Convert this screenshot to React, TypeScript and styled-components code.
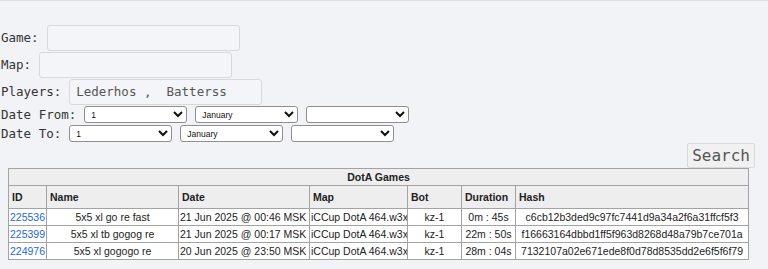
import React from 'react'
import styled, { createGlobalStyle } from 'styled-components'

const Global = createGlobalStyle`
  html, body {
    margin: 0;
    padding: 0;
    background: #f2f3f7;
  }
  body {
    border-top: 1px solid #dcdde3;
    font-family: 'DejaVu Sans Mono', monospace;
  }
`

const Page = styled.div`
  padding: 24px 0 0 1px;
`

const Form = styled.div`
  display: flex;
  flex-direction: column;
  gap: 2px;
`

const Row = styled.div<{ $h?: number }>`
  display: flex;
  align-items: center;
  gap: 8px;
  height: ${(p) => p.$h || 25}px;
`

const Label = styled.label`
  font-family: 'DejaVu Sans Mono', monospace;
  font-size: 12.5px;
  color: #333;
  white-space: pre;
`

const TextInput = styled.input`
  box-sizing: border-box;
  width: 193px;
  height: 26px;
  border: 1px solid #d8d9de;
  border-radius: 3px;
  background: #f4f5f8;
  padding: 0 6px;
  font-family: 'DejaVu Sans Mono', monospace;
  font-size: 12.5px;
  color: #555;
  outline: none;
`

const Select = styled.select`
  box-sizing: border-box;
  width: 103px;
  height: 17px;
  border: 1px solid #8f8f8f;
  border-radius: 3px;
  background: #fff;
  font-family: 'Liberation Sans', Arial, sans-serif;
  font-size: 8.5px;
  color: #111;
  padding: 0 2px;
`

const DateRows = styled.div`
  display: flex;
  flex-direction: column;
  gap: 2px;
  margin-top: 2px;
`

const ButtonBar = styled.div`
  display: flex;
  justify-content: flex-end;
  padding-right: 13px;
  margin-top: 1px;
`

const SearchButton = styled.button`
  height: 25px;
  padding: 0 4px;
  border: 1px solid #dadada;
  border-radius: 2px;
  background: #f1f1f1;
  font-family: 'DejaVu Sans Mono', monospace;
  font-size: 16px;
  color: #555;
`

const Table = styled.table`
  margin-left: 7px;
  width: 740px;
  table-layout: fixed;
  border-collapse: collapse;
  font-family: 'Liberation Sans', Arial, sans-serif;
  font-size: 10.5px;
  color: #222;
  background: #fff;
`

const Title = styled.th`
  height: 16px;
  padding: 0;
  background: #eeeeee;
  border: 1px solid #a3a3a3;
  font-weight: bold;
  text-align: center;
`

const Head = styled.th`
  height: 22px;
  padding: 0 3px;
  background: #eeeeee;
  border: 1px solid #a3a3a3;
  font-weight: bold;
  text-align: left;
`

const Cell = styled.td<{ $align?: string }>`
  height: 16px;
  padding: 0 1px;
  border: 1px solid #a3a3a3;
  text-align: ${(p) => p.$align || 'left'};
  white-space: nowrap;
  overflow: hidden;
`

const GameLink = styled.a`
  color: #1f68d2;
  text-decoration: none;
`

const days = Array.from({ length: 31 }, (_, i) => String(i + 1))
const months = ['January', 'February', 'March', 'April', 'May', 'June', 'July', 'August', 'September', 'October', 'November', 'December']

const games = [
  { id: '225536', name: '5x5 xl go re fast', date: '21 Jun 2025 @ 00:46 MSK', dur: '0m : 45s', hash: 'c6cb12b3ded9c97fc7441d9a34a2f6a31ffcf5f3' },
  { id: '225399', name: '5x5 xl tb gogog re', date: '21 Jun 2025 @ 00:17 MSK', dur: '22m : 50s', hash: 'f16663164dbbd1ff5f963d8268d48a79b7ce701a' },
  { id: '224976', name: '5x5 xl gogogo re', date: '20 Jun 2025 @ 23:50 MSK', dur: '28m : 04s', hash: '7132107a02e671ede8f0d78d8535dd2e6f5f6f79' },
]

const DatePicker = () => (
  <>
    <Select defaultValue="1">
      {days.map((d) => (
        <option key={d}>{d}</option>
      ))}
    </Select>
    <Select defaultValue="January">
      {months.map((m) => (
        <option key={m}>{m}</option>
      ))}
    </Select>
    <Select defaultValue="">
      <option value=""></option>
      <option>2025</option>
    </Select>
  </>
)

export default function App() {
  return (
    <Page>
      <Global />
      <Form>
        <Row>
          <Label>Game:</Label>
          <TextInput />
        </Row>
        <Row>
          <Label>Map:</Label>
          <TextInput />
        </Row>
        <Row>
          <Label>Players:</Label>
          <TextInput defaultValue="Lederhos ,  Batterss" />
        </Row>
      </Form>
      <DateRows>
        <Row $h={17}>
          <Label>Date From:</Label>
          <DatePicker />
        </Row>
        <Row $h={17}>
          <Label>Date To:</Label>
          <DatePicker />
        </Row>
      </DateRows>
      <ButtonBar>
        <SearchButton>Search</SearchButton>
      </ButtonBar>
      <Table>
        <colgroup>
          <col style={{ width: 38 }} />
          <col style={{ width: 132 }} />
          <col style={{ width: 131 }} />
          <col style={{ width: 98 }} />
          <col style={{ width: 54 }} />
          <col style={{ width: 54 }} />
          <col style={{ width: 233 }} />
        </colgroup>
        <thead>
          <tr>
            <Title colSpan={7}>DotA Games</Title>
          </tr>
          <tr>
            <Head>ID</Head>
            <Head>Name</Head>
            <Head>Date</Head>
            <Head>Map</Head>
            <Head>Bot</Head>
            <Head>Duration</Head>
            <Head>Hash</Head>
          </tr>
        </thead>
        <tbody>
          {games.map((g) => (
            <tr key={g.id}>
              <Cell>
                <GameLink href="#">{g.id}</GameLink>
              </Cell>
              <Cell $align="center">{g.name}</Cell>
              <Cell>{g.date}</Cell>
              <Cell>iCCup DotA 464.w3x</Cell>
              <Cell $align="center">kz-1</Cell>
              <Cell $align="center">{g.dur}</Cell>
              <Cell $align="center">{g.hash}</Cell>
            </tr>
          ))}
        </tbody>
      </Table>
    </Page>
  )
}
